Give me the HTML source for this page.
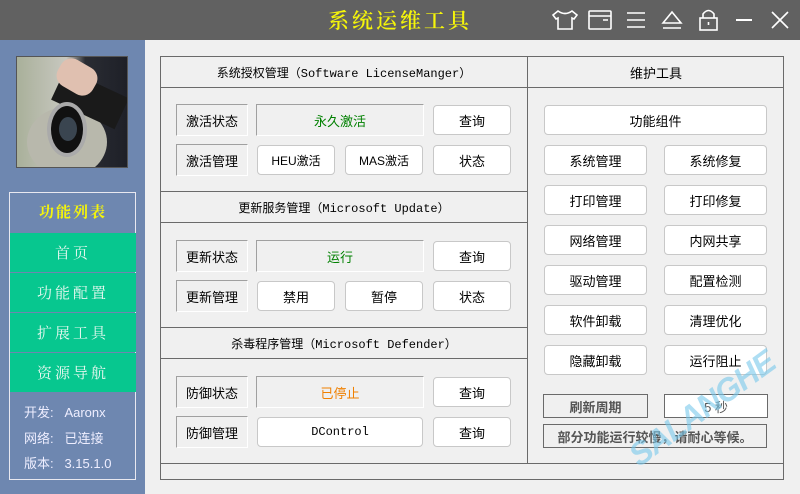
<!DOCTYPE html>
<html><head><meta charset="utf-8"><style>
*{margin:0;padding:0;box-sizing:border-box}
body{width:800px;height:494px;position:relative;overflow:hidden;background:#f0f0f0;font-family:"Liberation Sans","Noto Sans CJK SC",sans-serif;font-size:13px;color:#000}
.a{position:absolute}
#top{left:0;top:0;width:800px;height:40px;background:#616161}
#title{left:300px;top:5px;width:200px;text-align:center;color:#f5f50a;font-family:"Noto Serif CJK SC",serif;font-size:21px;font-weight:600;letter-spacing:3px}
#side{left:0;top:40px;width:145px;height:454px;background:#6e87b0}
.lbl{border:1px solid #a0a0a0;border-right-color:#fff;border-bottom-color:#fff;display:flex;align-items:center;justify-content:center;font-size:13px}
.btn{background:#fff;border:1px solid #c8c8c8;border-radius:4px;display:flex;align-items:center;justify-content:center;font-size:13px}
.hl{background:#6a6a6a;height:1px}
.vl{background:#6a6a6a;width:1px}
.hd{display:flex;align-items:center;justify-content:center;font-size:12px;font-family:"Liberation Mono","Noto Sans CJK SC",monospace}
.mi{left:10px;width:126px;height:39px;background:#07c78f;color:#e8f8f0;display:flex;align-items:center;justify-content:center;font-family:"Noto Serif CJK SC",serif;font-size:15px;letter-spacing:3px}
.inf{left:24px;color:#eef;font-size:13px}
</style></head><body>
<div class="a" id="top"></div>
<div class="a" id="title">系统运维工具</div>
<svg class="a" style="left:545px;top:5px" width="250" height="30" viewBox="545 5 250 30" fill="none" stroke="#fff" stroke-width="1.6">
<path d="M558 11 L553 15 L556 19 L558 18 L558 29 L572 29 L572 18 L574 19 L577 15 L572 11 Q565 16 558 11Z"/>
<rect x="589" y="11" width="22" height="18" rx="1"/><path d="M589 16 H611 M603 20 H608"/>
<path d="M627 13 H645 M627 20 H645 M627 27 H645"/>
<path d="M663 23 L672 12 L681 23 Z M663 28 H681"/>
<rect x="700" y="18" width="17" height="12"/><path d="M703 18 V14 Q708.5 7 714 14 V18 M708.5 22 V25"/>
<path d="M736 20 H752" stroke-width="2"/>
<path d="M772 12 L788 28 M788 12 L772 28"/>
</svg>
<div class="a" id="side"></div>
<div class="a" style="left:16px;top:56px;width:112px;height:112px;border:1px solid #555;background:linear-gradient(90deg,#a9b09a 0%,#c8c8c0 45%,#2a2c33 62%,#1e2028 100%);overflow:hidden">
<div class="a" style="left:10px;top:50px;width:80px;height:70px;background:#b8b8ac;border-radius:50%"></div>
<div class="a" style="left:38px;top:25px;width:70px;height:34px;background:#1a1a1a;transform:rotate(25deg)"></div>
<div class="a" style="left:40px;top:5px;width:40px;height:30px;background:#e0c0b0;border-radius:12px;transform:rotate(30deg)"></div>
<div class="a" style="left:30px;top:45px;width:40px;height:55px;border-radius:50%;background:#111;border:4px solid #aaa"></div>
<div class="a" style="left:42px;top:60px;width:18px;height:24px;border-radius:50%;background:#3a4550"></div>
</div>
<div class="a" style="left:9px;top:192px;width:127px;height:288px;border:1px solid #e8e8f0"></div>
<div class="a" style="left:10px;top:201px;width:126px;text-align:center;color:#f5f50a;font-family:'Noto Serif CJK SC',serif;font-weight:bold;font-size:15px;letter-spacing:2px">功能列表</div>
<div class="a mi" style="top:233px">首页</div>
<div class="a mi" style="top:273px">功能配置</div>
<div class="a mi" style="top:313px">扩展工具</div>
<div class="a mi" style="top:353px">资源导航</div>
<div class="a inf" style="top:402px">开发:&nbsp;&nbsp;&nbsp;Aaronx</div>
<div class="a inf" style="top:428px">网络:&nbsp;&nbsp;&nbsp;已连接</div>
<div class="a inf" style="top:453px">版本:&nbsp;&nbsp;&nbsp;3.15.1.0</div>

<div class="a" style="left:160px;top:56px;width:624px;height:424px;border:1px solid #6a6a6a"></div>
<div class="a vl" style="left:527px;top:56px;height:408px"></div>
<div class="a hl" style="left:160px;top:87px;width:624px"></div>
<div class="a hl" style="left:160px;top:463px;width:624px"></div>
<div class="a hl" style="left:160px;top:191px;width:368px"></div>
<div class="a hl" style="left:160px;top:222px;width:368px"></div>
<div class="a hl" style="left:160px;top:327px;width:368px"></div>
<div class="a hl" style="left:160px;top:358px;width:368px"></div>
<div class="a hd" style="left:160px;top:57px;width:368px;height:30px">系统授权管理（Software LicenseManger）</div>
<div class="a hd" style="left:528px;top:57px;width:256px;height:30px;font-size:13px">维护工具</div>
<div class="a hd" style="left:160px;top:192px;width:368px;height:30px">更新服务管理（Microsoft Update）</div>
<div class="a hd" style="left:160px;top:328px;width:368px;height:30px">杀毒程序管理（Microsoft Defender）</div>

<div class="a lbl" style="left:176px;top:104px;width:72px;height:32px">激活状态</div>
<div class="a lbl" style="left:256px;top:104px;width:168px;height:32px;color:#008000">永久激活</div>
<div class="a btn" style="left:433px;top:105px;width:78px;height:30px">查询</div>
<div class="a lbl" style="left:176px;top:144px;width:72px;height:32px">激活管理</div>
<div class="a btn" style="left:257px;top:145px;width:78px;height:30px;font-size:12px">HEU激活</div>
<div class="a btn" style="left:345px;top:145px;width:78px;height:30px;font-size:12px">MAS激活</div>
<div class="a btn" style="left:433px;top:145px;width:78px;height:30px">状态</div>

<div class="a lbl" style="left:176px;top:240px;width:72px;height:32px">更新状态</div>
<div class="a lbl" style="left:256px;top:240px;width:168px;height:32px;color:#008000">运行</div>
<div class="a btn" style="left:433px;top:241px;width:78px;height:30px">查询</div>
<div class="a lbl" style="left:176px;top:280px;width:72px;height:32px">更新管理</div>
<div class="a btn" style="left:257px;top:281px;width:78px;height:30px">禁用</div>
<div class="a btn" style="left:345px;top:281px;width:78px;height:30px">暂停</div>
<div class="a btn" style="left:433px;top:281px;width:78px;height:30px">状态</div>

<div class="a lbl" style="left:176px;top:376px;width:72px;height:32px">防御状态</div>
<div class="a lbl" style="left:256px;top:376px;width:168px;height:32px;color:#f08000">已停止</div>
<div class="a btn" style="left:433px;top:377px;width:78px;height:30px">查询</div>
<div class="a lbl" style="left:176px;top:416px;width:72px;height:32px">防御管理</div>
<div class="a btn" style="left:257px;top:417px;width:166px;height:30px;font-family:'Liberation Mono',monospace;font-size:12px">DControl</div>
<div class="a btn" style="left:433px;top:417px;width:78px;height:30px">查询</div>

<div class="a btn" style="left:544px;top:105px;width:223px;height:30px">功能组件</div>
<div class="a btn" style="left:544px;top:145px;width:103px;height:30px">系统管理</div>
<div class="a btn" style="left:664px;top:145px;width:103px;height:30px">系统修复</div>
<div class="a btn" style="left:544px;top:185px;width:103px;height:30px">打印管理</div>
<div class="a btn" style="left:664px;top:185px;width:103px;height:30px">打印修复</div>
<div class="a btn" style="left:544px;top:225px;width:103px;height:30px">网络管理</div>
<div class="a btn" style="left:664px;top:225px;width:103px;height:30px">内网共享</div>
<div class="a btn" style="left:544px;top:265px;width:103px;height:30px">驱动管理</div>
<div class="a btn" style="left:664px;top:265px;width:103px;height:30px">配置检测</div>
<div class="a btn" style="left:544px;top:305px;width:103px;height:30px">软件卸载</div>
<div class="a btn" style="left:664px;top:305px;width:103px;height:30px">清理优化</div>
<div class="a btn" style="left:544px;top:345px;width:103px;height:30px">隐藏卸载</div>
<div class="a btn" style="left:664px;top:345px;width:103px;height:30px">运行阻止</div>
<div class="a" style="left:543px;top:394px;width:105px;height:24px;border:1px solid #6a6a6a;display:flex;align-items:center;justify-content:center;font-weight:bold;color:#555">刷新周期</div>
<div class="a" style="left:664px;top:394px;width:104px;height:24px;border:1px solid #6a6a6a;background:#fff;display:flex;align-items:center;justify-content:center;color:#555">5 秒</div>
<div class="a" style="left:543px;top:424px;width:224px;height:24px;border:1px solid #6a6a6a;display:flex;align-items:center;justify-content:center;font-weight:bold;color:#555">部分功能运行较慢，请耐心等候。</div>
<div class="a" style="left:622px;top:444px;font-size:32px;font-weight:900;font-style:italic;color:rgba(120,200,235,.6);transform:rotate(-36deg);transform-origin:left top;letter-spacing:-1px">SALANGHE</div>
</body></html>
